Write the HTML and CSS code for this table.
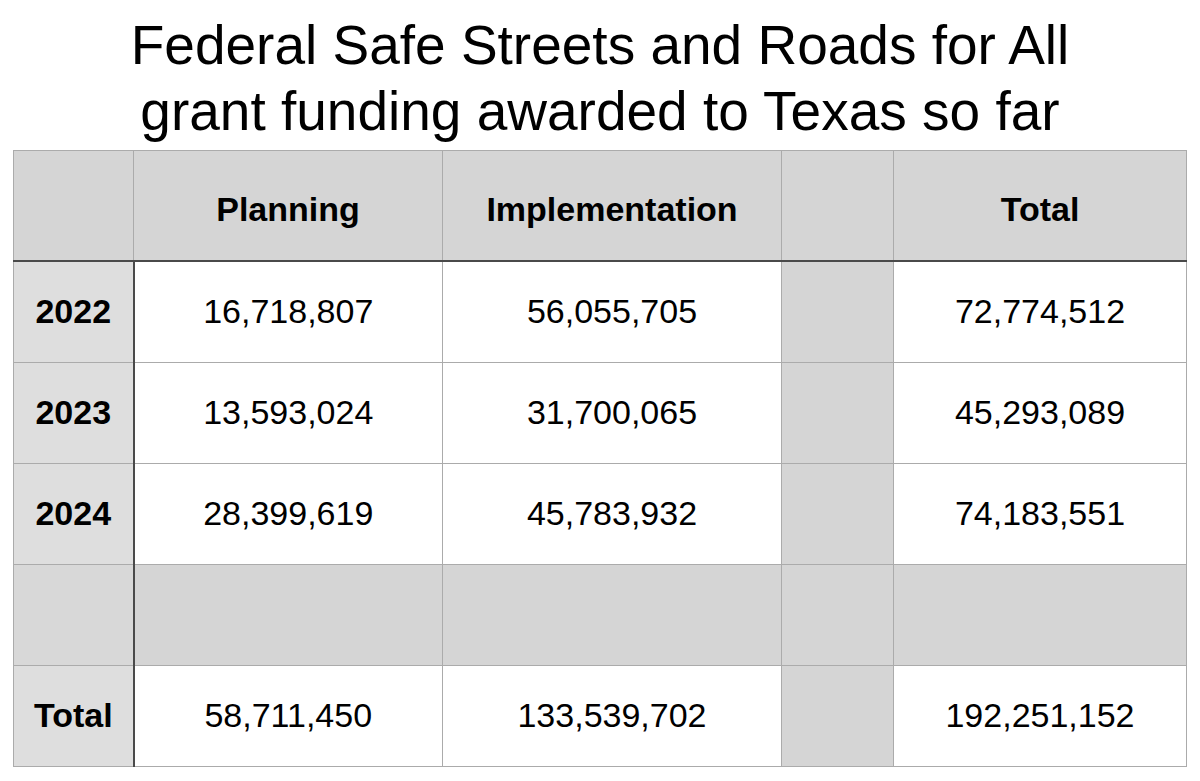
FILE: index.html
```html
<!DOCTYPE html>
<html lang="en">
<head>
<meta charset="utf-8">
<title>Safe Streets and Roads for All – Texas</title>
<link rel="stylesheet" href="styles.css">
</head>
<body>
<h1 class="title">Federal Safe Streets and Roads for All<br>grant funding awarded to Texas so far</h1>
<table class="grid">
  <colgroup>
    <col class="c-label">
    <col class="c-plan">
    <col class="c-impl">
    <col class="c-gap">
    <col class="c-total">
  </colgroup>
  <thead>
    <tr>
      <th class="corner"></th>
      <th>Planning</th>
      <th>Implementation</th>
      <th></th>
      <th>Total</th>
    </tr>
  </thead>
  <tbody>
    <tr>
      <th class="rowlabel">2022</th>
      <td>16,718,807</td>
      <td>56,055,705</td>
      <td class="gap"></td>
      <td>72,774,512</td>
    </tr>
    <tr>
      <th class="rowlabel">2023</th>
      <td>13,593,024</td>
      <td>31,700,065</td>
      <td class="gap"></td>
      <td>45,293,089</td>
    </tr>
    <tr>
      <th class="rowlabel">2024</th>
      <td>28,399,619</td>
      <td>45,783,932</td>
      <td class="gap"></td>
      <td>74,183,551</td>
    </tr>
    <tr class="blank">
      <th class="rowlabel"></th>
      <td></td>
      <td></td>
      <td class="gap"></td>
      <td></td>
    </tr>
    <tr>
      <th class="rowlabel">Total</th>
      <td>58,711,450</td>
      <td>133,539,702</td>
      <td class="gap"></td>
      <td>192,251,152</td>
    </tr>
  </tbody>
</table>
</body>
</html>
```
FILE: styles.css
```css
html, body {
  margin: 0;
  padding: 0;
  background: #ffffff;
}

body {
  font-family: "Liberation Sans", Arial, Helvetica, sans-serif;
  color: #000000;
}

.title {
  box-sizing: border-box;
  height: 150px;
  margin: 0;
  padding-top: 12px;
  font-size: 55px;
  font-weight: normal;
  line-height: 66px;
  text-align: center;
}

.grid {
  margin-left: 13px;
  border-collapse: collapse;
  table-layout: fixed;
  width: 1173px;
}

.c-label { width: 120px; }
.c-plan { width: 309px; }
.c-impl { width: 339px; }
.c-gap { width: 112px; }
.c-total { width: 293px; }

.grid th,
.grid td {
  border: 1px solid #ababab;
  padding: 0;
  text-align: center;
  font-size: 34px;
  height: 100px;
}

.grid thead th {
  background: #d5d5d5;
  font-weight: bold;
  height: 110px;
  padding-top: 8px;
  box-sizing: border-box;
  border-bottom: 2px solid #4a4a4a;
}

.grid td {
  font-weight: normal;
  background: #ffffff;
}

.grid .rowlabel {
  background: #dedede;
  font-weight: bold;
  border-right: 2px solid #4a4a4a;
}

.grid .gap {
  background: #d5d5d5;
}

.grid .blank td,
.grid .blank th {
  background: #d5d5d5;
}

.grid .blank .rowlabel {
  background: #d8d8d8;
}
```
